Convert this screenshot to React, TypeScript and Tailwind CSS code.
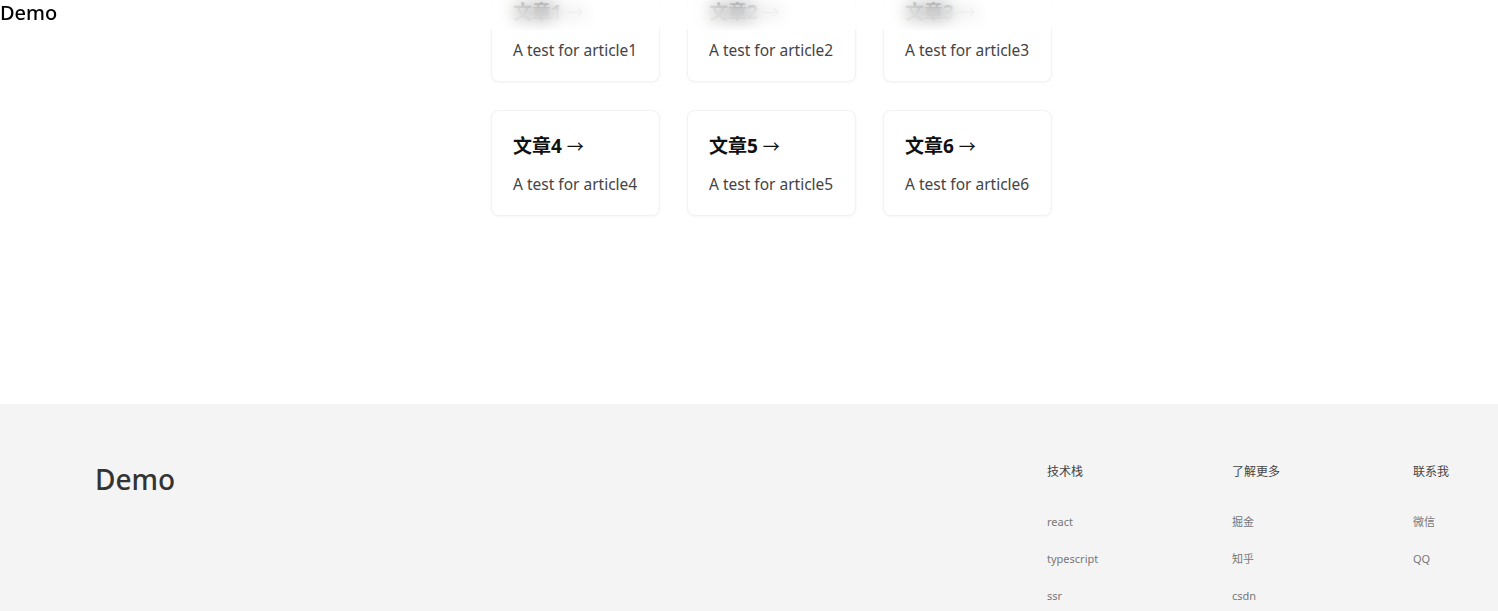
import React from "react";

const articles = [1, 2, 3, 4, 5, 6].map((n) => ({
  id: n,
  title: `文章${n}`,
  desc: `A test for article${n}`,
}));

const footerColumns = [
  { title: "技术栈", items: ["react", "typescript", "ssr"], w: "w-[185px]" },
  { title: "了解更多", items: ["掘金", "知乎", "csdn"], w: "w-[181px]" },
  { title: "联系我", items: ["微信", "QQ"], w: "w-[36px]" },
];

const font = {
  fontFamily: '"Noto Sans", "Noto Sans CJK SC", sans-serif',
};

const App = () => {
  return (
    <div className="relative min-h-[611px] bg-white overflow-hidden" style={font}>
      <header className="absolute top-0 left-0 right-0 z-10 h-[30px] bg-white/50 backdrop-blur-[8px]">
        <span className="block leading-[26px] text-[20px] font-medium text-black">
          Demo
        </span>
      </header>

      <main className="pl-[491px] -mt-[24px]">
        <ul className="grid grid-cols-[169px_169px_169px] gap-x-[27px] gap-y-[28px]">
          {articles.map((a) => (
            <li
              key={a.id}
              className="h-[106px] rounded-lg border border-[#f2f2f2] bg-white px-[21px] pt-[22px] shadow-[0_1px_3px_rgba(0,0,0,0.04)]"
            >
              <h3 className="text-[19px] font-bold leading-[26px] text-[#111]">
                {a.title} <span className="font-normal text-[17px]">→</span>
              </h3>
              <p className="mt-[13px] text-[15.5px] leading-[22px] text-[#444]">
                {a.desc}
              </p>
            </li>
          ))}
        </ul>
      </main>

      <footer className="mt-[188px] h-[207px] bg-[#f4f4f4] flex">
        <div className="pl-[95px] pt-[55px]">
          <span className="text-[28px] leading-[40px] text-[#333] font-medium">
            Demo
          </span>
        </div>
        <div className="ml-auto mr-[49px] flex pt-[59px]">
          {footerColumns.map((col) => (
            <div key={col.title} className={col.w}>
              <p className="text-[12px] leading-[18px] text-[#444]">{col.title}</p>
              <ul className="mt-[32px] flex flex-col gap-[19px]">
                {col.items.map((item) => (
                  <li key={item} className="text-[11px] leading-[18px] text-[#777]">
                    {item}
                  </li>
                ))}
              </ul>
            </div>
          ))}
        </div>
      </footer>
    </div>
  );
};

export default App;
